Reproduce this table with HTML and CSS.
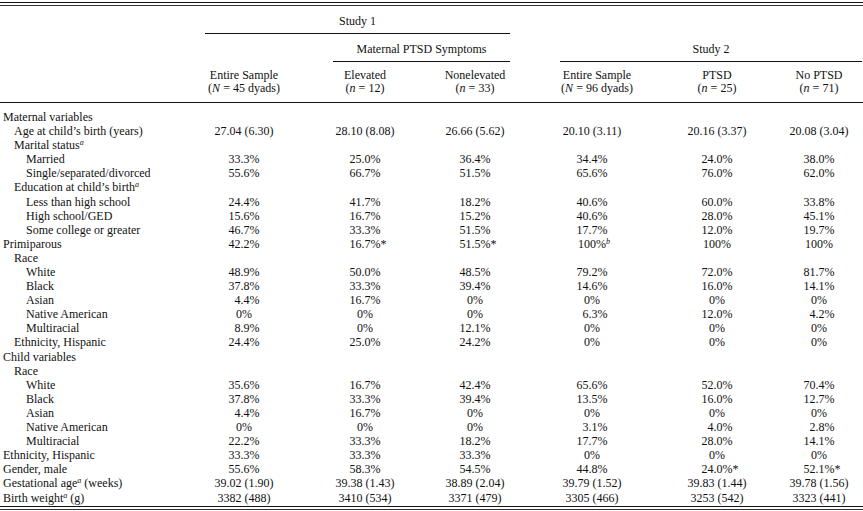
FILE: index.html
```html
<!DOCTYPE html>
<html lang="en">
<head>
<meta charset="utf-8">
<title>Sample characteristics</title>
<link rel="stylesheet" href="styles.css">
</head>
<body>
<div class="rule rule-top"></div>
<table class="stats">
  <colgroup>
    <col class="c0"><col class="c1"><col class="c2"><col class="c3"><col class="c4"><col class="c5"><col class="c6">
  </colgroup>
  <thead>
    <tr class="r-span1">
      <th></th>
      <th colspan="3"><div class="spanner sp-study1">Study 1</div></th>
      <th colspan="3"></th>
    </tr>
    <tr class="r-span2">
      <th></th>
      <th></th>
      <th colspan="2"><div class="spanner sp-mat">Maternal PTSD Symptoms</div></th>
      <th colspan="3"><div class="spanner sp-study2">Study 2</div></th>
    </tr>
    <tr class="r-head">
      <th></th>
      <th>Entire Sample<br>(<i>N</i> = 45 dyads)</th>
      <th>Elevated<br>(<i>n</i> = 12)</th>
      <th>Nonelevated<br>(<i>n</i> = 33)</th>
      <th class="shift">Entire Sample<br>(<i>N</i> = 96 dyads)</th>
      <th>PTSD<br>(<i>n</i> = 25)</th>
      <th>No PTSD<br>(<i>n</i> = 71)</th>
    </tr>
  </thead>
  <tbody>
    <tr class="first"><td class="l0">Maternal variables</td><td></td><td></td><td></td><td></td><td></td><td></td></tr>
    <tr><td class="l1">Age at child’s birth (years)</td><td>27.04 (6.30)</td><td>28.10 (8.08)</td><td>26.66 (5.62)</td><td>20.10 (3.11)</td><td>20.16 (3.37)</td><td>20.08 (3.04)</td></tr>
    <tr><td class="l1">Marital status<sup class="fn">a</sup></td><td></td><td></td><td></td><td></td><td></td><td></td></tr>
    <tr><td class="l2">Married</td><td>33.3%</td><td>25.0%</td><td>36.4%</td><td>34.4%</td><td>24.0%</td><td>38.0%</td></tr>
    <tr><td class="l2">Single/separated/divorced</td><td>55.6%</td><td>66.7%</td><td>51.5%</td><td>65.6%</td><td>76.0%</td><td>62.0%</td></tr>
    <tr><td class="l1">Education at child’s birth<sup class="fn">a</sup></td><td></td><td></td><td></td><td></td><td></td><td></td></tr>
    <tr><td class="l2">Less than high school</td><td>24.4%</td><td>41.7%</td><td>18.2%</td><td>40.6%</td><td>60.0%</td><td>33.8%</td></tr>
    <tr><td class="l2">High school/GED</td><td>15.6%</td><td>16.7%</td><td>15.2%</td><td>40.6%</td><td>28.0%</td><td>45.1%</td></tr>
    <tr><td class="l2">Some college or greater</td><td>46.7%</td><td>33.3%</td><td>51.5%</td><td>17.7%</td><td>12.0%</td><td>19.7%</td></tr>
    <tr><td class="l0">Primiparous</td><td>42.2%</td><td>16.7%<span class="star">*</span></td><td>51.5%<span class="star">*</span></td><td>100%<sup class="fn hang">b</sup></td><td>100%</td><td>100%</td></tr>
    <tr><td class="l1">Race</td><td></td><td></td><td></td><td></td><td></td><td></td></tr>
    <tr><td class="l2">White</td><td>48.9%</td><td>50.0%</td><td>48.5%</td><td>79.2%</td><td>72.0%</td><td>81.7%</td></tr>
    <tr><td class="l2">Black</td><td>37.8%</td><td>33.3%</td><td>39.4%</td><td>14.6%</td><td>16.0%</td><td>14.1%</td></tr>
    <tr><td class="l2">Asian</td><td>&#8199;4.4%</td><td>16.7%</td><td>0%</td><td>0%</td><td>0%</td><td>0%</td></tr>
    <tr><td class="l2">Native American</td><td>0%</td><td>0%</td><td>0%</td><td>&#8199;6.3%</td><td>12.0%</td><td>&#8199;4.2%</td></tr>
    <tr><td class="l2">Multiracial</td><td>&#8199;8.9%</td><td>0%</td><td>12.1%</td><td>0%</td><td>0%</td><td>0%</td></tr>
    <tr><td class="l1">Ethnicity, Hispanic</td><td>24.4%</td><td>25.0%</td><td>24.2%</td><td>0%</td><td>0%</td><td>0%</td></tr>
    <tr><td class="l0">Child variables</td><td></td><td></td><td></td><td></td><td></td><td></td></tr>
    <tr><td class="l1">Race</td><td></td><td></td><td></td><td></td><td></td><td></td></tr>
    <tr><td class="l2">White</td><td>35.6%</td><td>16.7%</td><td>42.4%</td><td>65.6%</td><td>52.0%</td><td>70.4%</td></tr>
    <tr><td class="l2">Black</td><td>37.8%</td><td>33.3%</td><td>39.4%</td><td>13.5%</td><td>16.0%</td><td>12.7%</td></tr>
    <tr><td class="l2">Asian</td><td>&#8199;4.4%</td><td>16.7%</td><td>0%</td><td>0%</td><td>0%</td><td>0%</td></tr>
    <tr><td class="l2">Native American</td><td>0%</td><td>0%</td><td>0%</td><td>&#8199;3.1%</td><td>&#8199;4.0%</td><td>&#8199;2.8%</td></tr>
    <tr><td class="l2">Multiracial</td><td>22.2%</td><td>33.3%</td><td>18.2%</td><td>17.7%</td><td>28.0%</td><td>14.1%</td></tr>
    <tr><td class="l0">Ethnicity, Hispanic</td><td>33.3%</td><td>33.3%</td><td>33.3%</td><td>0%</td><td>0%</td><td>0%</td></tr>
    <tr><td class="l0">Gender, male</td><td>55.6%</td><td>58.3%</td><td>54.5%</td><td>44.8%</td><td>24.0%<span class="star">*</span></td><td>52.1%<span class="star">*</span></td></tr>
    <tr><td class="l0">Gestational age<sup class="fn">a</sup> (weeks)</td><td>39.02 (1.90)</td><td>39.38 (1.43)</td><td>38.89 (2.04)</td><td>39.79 (1.52)</td><td>39.83 (1.44)</td><td>39.78 (1.56)</td></tr>
    <tr><td class="l0">Birth weight<sup class="fn">a</sup> (g)</td><td>3382 (488)</td><td>3410 (534)</td><td>3371 (479)</td><td>3305 (466)</td><td>3253 (542)</td><td>3323 (441)</td></tr>
  </tbody>
</table>
<div class="rule rule-bottom"></div>
</body>
</html>
```
FILE: styles.css
```css
html, body {
  margin: 0;
  padding: 0;
  background: #fff;
}
body {
  width: 863px;
  font-family: "Liberation Serif", "Times New Roman", serif;
  font-size: 12px;
  color: #111;
}
.rule {
  height: 2px;
  border-top: 1px solid #111;
  border-bottom: 1px solid #333;
}
.rule-top {
  margin-top: 2px;
}
.rule-bottom {
  margin-top: 1px;
}
.stats {
  width: 863px;
  table-layout: fixed;
  border-collapse: separate;
  border-spacing: 0;
}
.c0 { width: 183px; }
.c1 { width: 122px; }
.c2 { width: 120px; }
.c3 { width: 100px; }
.c4 { width: 134px; }
.c5 { width: 116px; }
.c6 { width: 88px; }

.stats th,
.stats td {
  padding: 0;
  font-weight: normal;
  text-align: center;
  white-space: nowrap;
  line-height: 14.1px;
  vertical-align: top;
}
.spanner {
  border-bottom: 1px solid #111;
  padding-bottom: 5px;
}
.r-span1 .spanner {
  padding-top: 8px;
}
.r-span2 .spanner {
  padding-top: 7.8px;
}
.sp-study1 { margin: 0 15px 0 22px; }
.sp-mat { margin: 0 15px 0 28px; }
.sp-study2 { margin: 0 1px 0 35px; }

.r-head th {
  line-height: 13px;
  padding-top: 7.5px;
  padding-bottom: 6.5px;
  border-bottom: 1px solid #111;
}
.r-head th.shift {
  padding-left: 10px;
}
.stats tbody tr.first td {
  padding-top: 7px;
}
.stats td.l0 { text-align: left; padding-left: 3px; }
.stats td.l1 { text-align: left; padding-left: 14px; }
.stats td.l2 { text-align: left; padding-left: 26px; }

.fn {
  font-style: italic;
  font-size: 8px;
  line-height: 0;
  vertical-align: 4px;
}
.hang {
  margin-right: -4px;
}
.star {
  margin-right: -6px;
}
```
